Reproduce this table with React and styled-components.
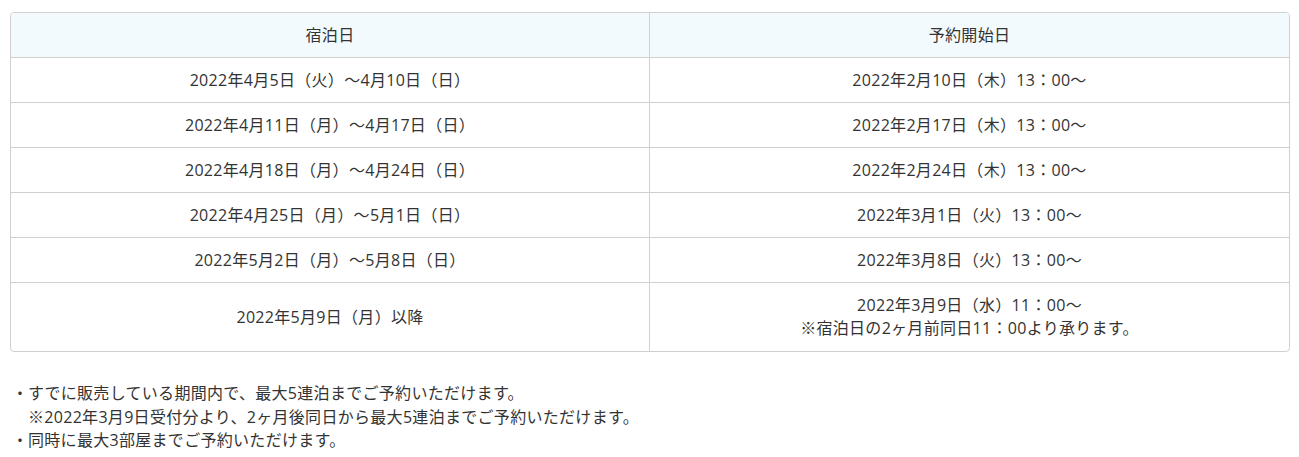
import React from "react";
import styled, { createGlobalStyle } from "styled-components";

const GlobalStyle = createGlobalStyle`
  html, body {
    margin: 0;
    padding: 0;
    background: #fff;
  }
  body {
    font-family: "Open Sans", "Noto Sans CJK JP", sans-serif;
    font-size: 16px;
    letter-spacing: 0.3px;
    color: #333;
  }
`;

const rows = [
  ["2022年4月5日（火）～4月10日（日）", ["2022年2月10日（木）13：00～"]],
  ["2022年4月11日（月）～4月17日（日）", ["2022年2月17日（木）13：00～"]],
  ["2022年4月18日（月）～4月24日（日）", ["2022年2月24日（木）13：00～"]],
  ["2022年4月25日（月）～5月1日（日）", ["2022年3月1日（火）13：00～"]],
  ["2022年5月2日（月）～5月8日（日）", ["2022年3月8日（火）13：00～"]],
  [
    "2022年5月9日（月）以降",
    ["2022年3月9日（水）11：00～", "※宿泊日の2ヶ月前同日11：00より承ります。"],
  ],
];

export default function App() {
  return (
    <>
      <GlobalStyle />
      <Wrapper>
        <Table>
          <thead>
            <tr>
              <Th>宿泊日</Th>
              <Th last>予約開始日</Th>
            </tr>
          </thead>
          <tbody>
            {rows.map(([stay, start], i) => (
              <tr key={i}>
                <Td bottom={i === rows.length - 1}>{stay}</Td>
                <Td last bottom={i === rows.length - 1}>
                  {start.map((line, j) => (
                    <Line key={j}>{line}</Line>
                  ))}
                </Td>
              </tr>
            ))}
          </tbody>
        </Table>
        <Notes>
          <Note>
            すでに販売している期間内で、最大5連泊までご予約いただけます。
            <Sub>※2022年3月9日受付分より、2ヶ月後同日から最大5連泊までご予約いただけます。</Sub>
          </Note>
          <Note>同時に最大3部屋までご予約いただけます。</Note>
        </Notes>
      </Wrapper>
    </>
  );
}

const Wrapper = styled.div`
  padding: 12px 10px 0 10px;
`;

const Table = styled.table`
  width: 1280px;
  border-collapse: separate;
  border-spacing: 0;
  border: 1px solid #d0d0d0;
  border-radius: 4px;
  overflow: hidden;
  table-layout: fixed;
`;

const Th = styled.th`
  height: 45px;
  box-sizing: border-box;
  padding: 0;
  font-weight: 400;
  text-align: center;
  background: #f3fafe;
  border-bottom: 1px solid #d0d0d0;
  border-right: ${(p) => (p.last ? "none" : "1px solid #d0d0d0")};
  line-height: 23px;
`;

const Td = styled.td`
  height: 45px;
  padding: ${(p) => (p.bottom ? "11px 8px" : "10px 8px")};
  box-sizing: border-box;
  text-align: center;
  border-bottom: ${(p) => (p.bottom ? "none" : "1px solid #d0d0d0")};
  border-right: ${(p) => (p.last ? "none" : "1px solid #d0d0d0")};
  line-height: 23px;
`;

const Line = styled.div``;

const Notes = styled.ul`
  list-style: none;
  margin: 30px 0 0 2px;
  padding: 0;
  line-height: 23.5px;
`;

const Note = styled.li`
  padding-left: 16px;
  position: relative;
  &::before {
    content: "・";
    position: absolute;
    left: 0;
  }
`;

const Sub = styled.div``;
